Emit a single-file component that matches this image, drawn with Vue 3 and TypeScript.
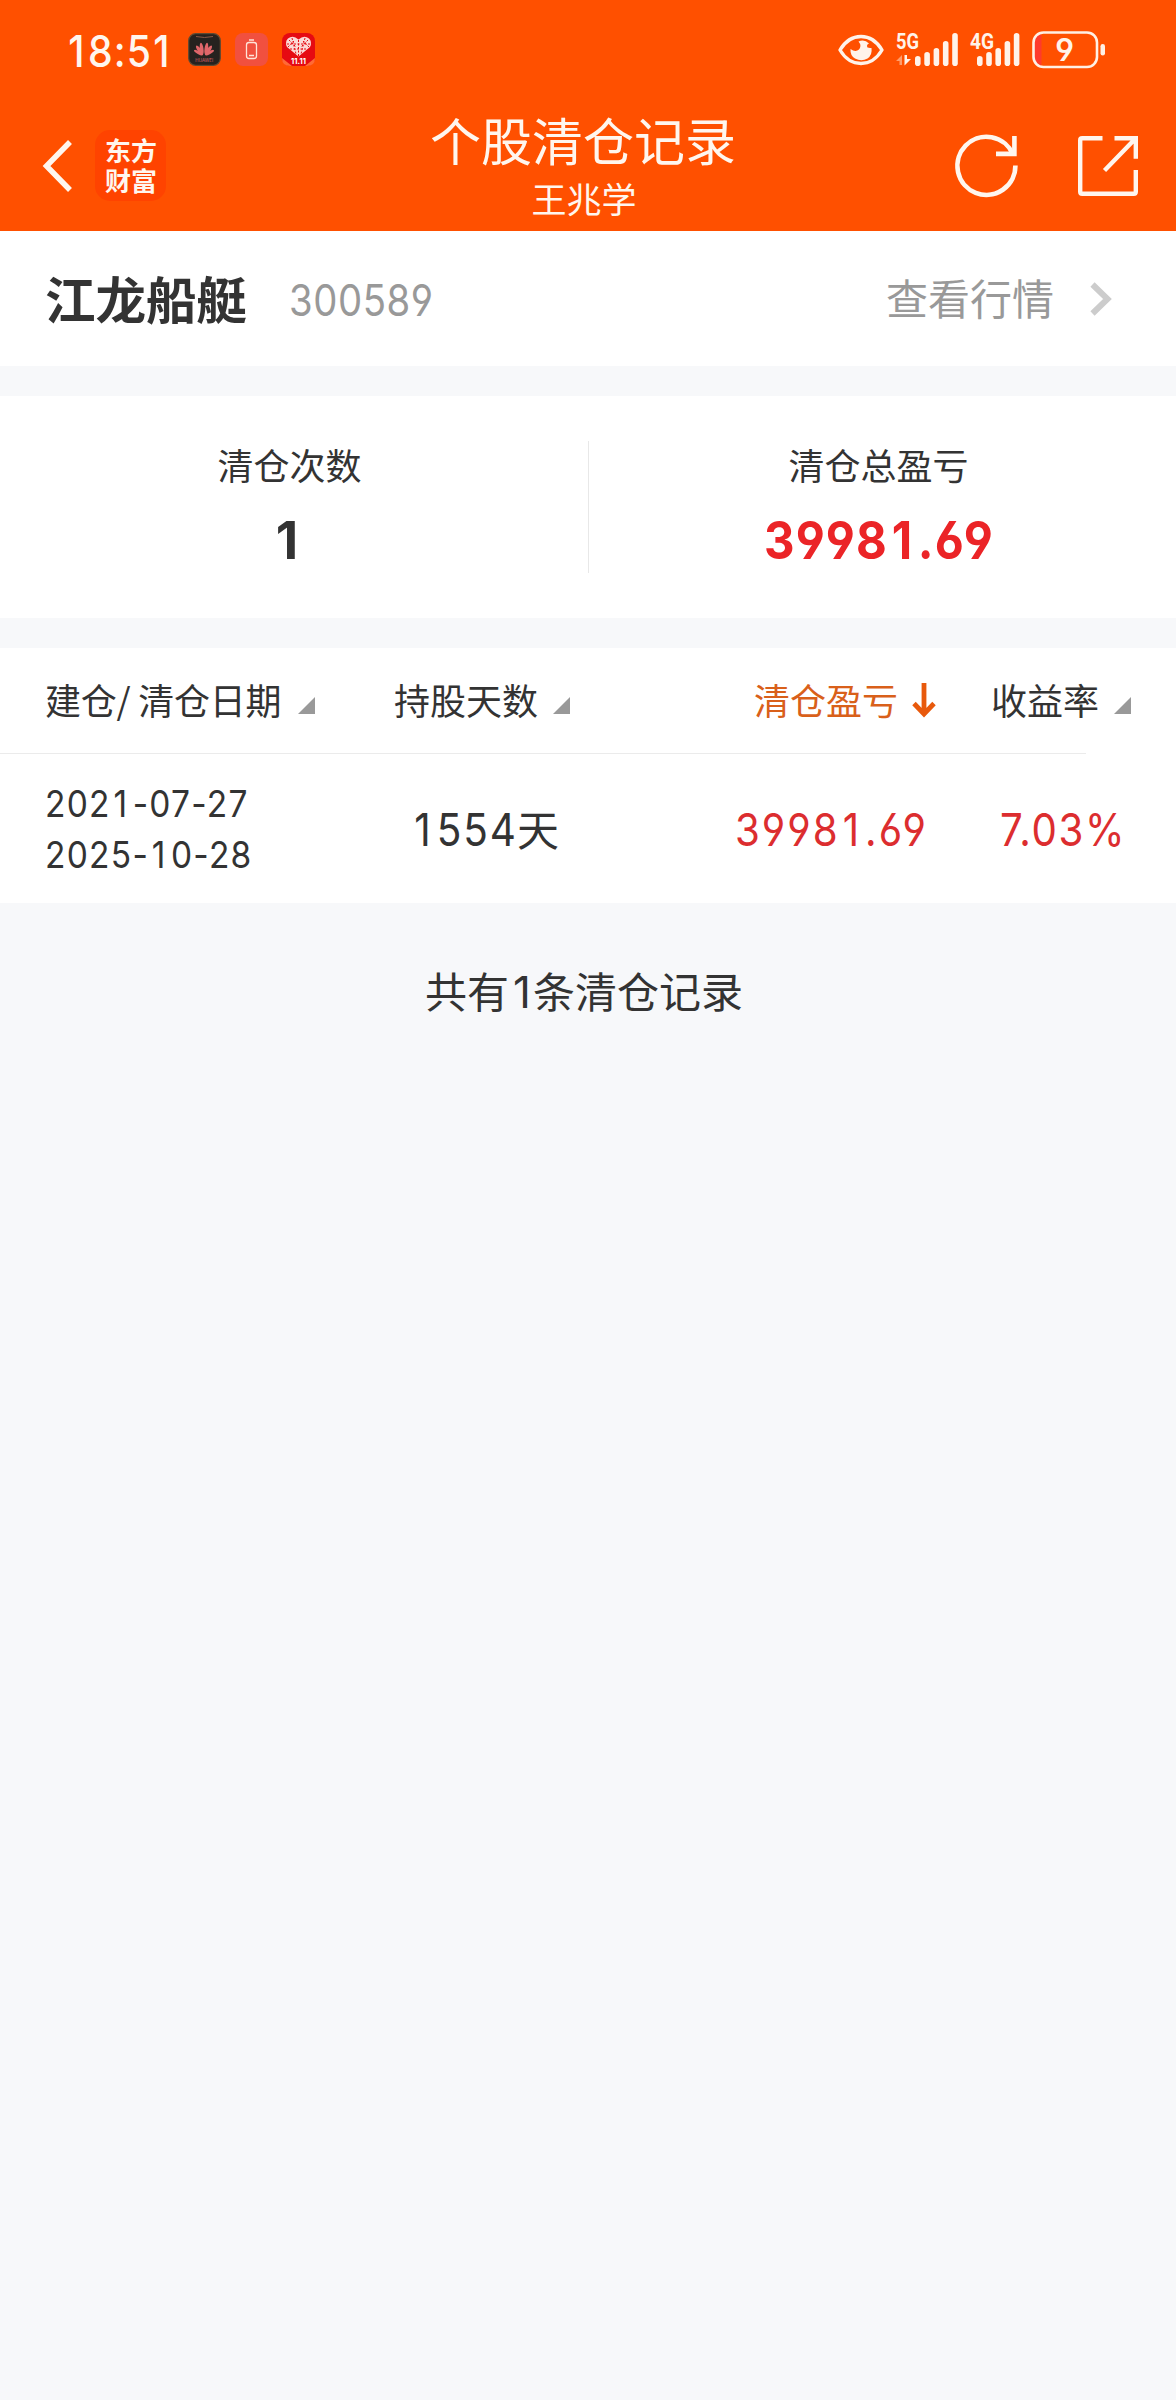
<script setup lang="ts">
import { h } from 'vue'

interface Column {
  key: string
  label: string
  active?: boolean
}

const columns: Column[] = [
  { key: 'date', label: '建仓/ 清仓日期' },
  { key: 'days', label: '持股天数' },
  { key: 'profit', label: '清仓盈亏', active: true },
  { key: 'rate', label: '收益率' },
]

const record = {
  open: '2021-07-27',
  close: '2025-10-28',
  days: '1554',
  profit: '39981.69',
  rate: '7.03%',
}

const bars = [10, 14, 18, 25, 33]

const Num = (props: { text: string }) =>
  h(
    'span',
    { class: 'num' },
    props.text
      .split(/(1)/)
      .filter(Boolean)
      .map((part) => (part === '1' ? h('span', { class: 'one' }, part) : part)),
  )
Num.props = ['text']
</script>

<template>
  <div class="page">
    <header class="header">
      <div class="status">
        <div class="clock"><Num text="18:51" /></div>
        <div class="apps">
          <svg width="33" height="33" viewBox="0 0 33 33">
            <rect x=".7" y=".7" width="31.6" height="31.6" rx="7" fill="#26221f" stroke="#5d4a33" stroke-width="1.2" />
            <path d="M8 3.500q8.500 2 17 0" fill="none" stroke="#8a5a48" stroke-width="1" />
            <g fill="#e0666a">
              <ellipse cx="14.600" cy="15.500" rx="1.800" ry="6" transform="rotate(-8 16 22)" />
              <ellipse cx="17.400" cy="15.500" rx="1.800" ry="6" transform="rotate(8 16 22)" />
              <ellipse cx="15" cy="15.500" rx="1.800" ry="5.600" transform="rotate(-35 16 22)" />
              <ellipse cx="17" cy="15.500" rx="1.800" ry="5.600" transform="rotate(35 16 22)" />
              <ellipse cx="15.500" cy="16" rx="1.500" ry="5" transform="rotate(-62 16 22)" />
              <ellipse cx="16.500" cy="16" rx="1.500" ry="5" transform="rotate(62 16 22)" />
            </g>
            <text x="16.200" y="28.500" text-anchor="middle" class="tiny" font-size="4.500" fill="#d96468">HUAWEI</text>
          </svg>
          <svg width="33" height="33" viewBox="0 0 33 33">
            <rect width="33" height="33" rx="8" fill="#f1503f" />
            <rect x="11.500" y="9.500" width="10" height="16" rx="2.500" fill="none" stroke="#ffe3d8" stroke-width="1.300" />
            <path d="M14 7h5M14 22.500h5" stroke="#ffe3d8" stroke-width="1.500" />
          </svg>
          <svg width="33" height="33" viewBox="0 0 33 33">
            <rect width="33" height="33" rx="8" fill="#e60a12" />
            <path d="M0 25l10 8H8q-8 0-8-8zM33 25l-10 8h2q8 0 8-8z" fill="#ff6a35" />
            <path d="M16.500 23.500L5 14Q2.500 9 6 5.500q5-4 10.500 1 5.500-5 10.500-1 3.500 3.500 1 8.500z" fill="#fbd9d5" />
            <path d="M5 11h23M8 16h17M10 5l4 16M23 5l-4 16M7 7l7 7M26 7l-7 7M16.500 7v16M6 14l6-6M27 14l-6-6" stroke="#e60a12" stroke-width="1" stroke-dasharray="2 1.500" fill="none" />
            <text x="16.500" y="31" text-anchor="middle" class="tiny" font-size="7.500" font-weight="700" fill="#fff">11.11</text>
          </svg>
        </div>
        <div class="signals">
          <svg class="eye" width="46" height="32" viewBox="0 0 46 32">
            <path d="M2 16Q10 2.500 23 2.500T44 16Q36 29.500 23 29.500T2 16z" fill="none" stroke="#fff3ea" stroke-width="3.400" stroke-linejoin="round" />
            <path d="M20.500 7.500q6-2.500 10.500 2-3 1-1.500 4 3 .5 4 .5 1 7-4 10.500-6 3.500-12.500 0-5-3-4.500-9.500 5 3.500 8.500.5 3-4-.5-8z" fill="#fff3ea" />
          </svg>
          <svg class="sig" width="62" height="35" viewBox="0 0 62 35">
            <text x="0" y="17" class="net" font-size="22" textLength="23" lengthAdjust="spacingAndGlyphs">5G</text>
            <path d="M0 29l6-6v10H3.500v-4z" fill="#ff9d6c" />
            <path d="M8.500 23h2.500v4h4l-6.500 6.500z" fill="#fff3ea" />
            <rect v-for="(b, i) in bars" :key="i" :x="19 + i * 9.3" :y="34 - b" width="5.600" :height="b" rx="2.800" fill="#fff3ea" />
          </svg>
          <svg class="sig" width="50" height="35" viewBox="0 0 50 35">
            <text x="0" y="17" class="net" font-size="22" textLength="24" lengthAdjust="spacingAndGlyphs">4G</text>
            <rect v-for="(b, i) in bars" :key="i" :x="7 + i * 9.2" :y="34 - b" width="5.600" :height="b" rx="2.800" fill="#fff3ea" />
          </svg>
          <svg class="sig" width="74" height="38" viewBox="0 0 74 38">
            <path d="M9.500 3.500v31Q2 34 2 26V12q0-8 7.500-8.500z" fill="#ff3a2c" />
            <rect x="1.500" y="1.500" width="63.500" height="34.500" rx="10" fill="none" stroke="#fff0e4" stroke-width="2.600" />
            <rect x="68.500" y="13" width="4.500" height="11.500" rx="2.200" fill="#fff0e4" />
            <text x="32.500" y="30" text-anchor="middle" class="level" font-size="31">9</text>
          </svg>
        </div>
      </div>
      <nav class="nav">
        <div class="left">
          <svg width="30" height="52" viewBox="0 0 30 52">
            <path d="M27 2L3.500 26 27 50" fill="none" stroke="#fff6ee" stroke-width="5.500" />
          </svg>
          <div class="logo">东方<br />财富</div>
        </div>
        <div class="titles">
          <h1>个股清仓记录</h1>
          <p>王兆学</p>
        </div>
        <div class="right">
          <svg width="64" height="64" viewBox="0 0 64 64">
            <path d="M59.400 31.500A29 29 0 1 1 57 20.300" fill="none" stroke="#fff6ee" stroke-width="4.600" />
            <path d="M58.400 2v17.900H40" fill="none" stroke="#fff6ee" stroke-width="4.600" />
          </svg>
          <svg width="60" height="60" viewBox="0 0 60 60">
            <path d="M24.500 2.200H4.200q-2 0-2 2v51.600q0 2 2 2h51.600q2 0 2-2V34M36.500 2.200h21.300v20.600M57 3L26.500 34.500" fill="none" stroke="#fff6ee" stroke-width="4.400" />
          </svg>
        </div>
      </nav>
    </header>

    <section class="stock">
      <strong>江龙船艇</strong>
      <div class="code"><Num text="300589" /></div>
      <a>查看行情</a>
      <svg width="22" height="34" viewBox="0 0 22 34">
        <path d="M2.500 2.500L17.500 17 2.500 31.500" fill="none" stroke="#ccc" stroke-width="6" />
      </svg>
    </section>

    <section class="summary">
      <div class="cell">
        <span class="label">清仓次数</span>
        <div class="value count"><Num text="1" /></div>
      </div>
      <i class="rule"></i>
      <div class="cell">
        <span class="label">清仓总盈亏</span>
        <div class="value total"><Num text="39981.69" /></div>
      </div>
    </section>

    <section class="table">
      <div class="thead">
        <div v-for="c in columns" :key="c.key" class="th" :class="[c.key, { active: c.active }]">
          <span>{{ c.label }}</span>
          <svg v-if="c.active" class="arrow" width="24" height="35" viewBox="0 0 24 35">
            <path d="M12 0v31M2 20.500l10 10.500 10-10.500" fill="none" stroke="#e8590c" stroke-width="4.800" />
          </svg>
          <svg v-else class="tri" width="17" height="17" viewBox="0 0 17 17">
            <path d="M17 0v17H0z" fill="#999" />
          </svg>
        </div>
      </div>
      <div class="line"></div>
      <div class="row">
        <div class="dates">
          <div><Num :text="record.open" /></div>
          <div><Num :text="record.close" /></div>
        </div>
        <div class="hold">
          <div class="hold-num"><Num :text="record.days" /></div>
          <span class="unit">天</span>
        </div>
        <div class="gain"><Num :text="record.profit" /></div>
        <div class="pct"><Num :text="record.rate" /></div>
      </div>
    </section>

    <footer class="foot"><span>共有</span><span class="total-count">1</span><span>条清仓记录</span></footer>
  </div>
</template>

<style>
body {
  margin: 0;
  background: #f7f8fa;
}
</style>

<style scoped>
.page {
  width: 1176px;
  min-height: 2400px;
  background: #f7f8fa;
  color: #333;
  font-family: "Noto Sans CJK SC", sans-serif;
  white-space: nowrap;
}
.page :deep(.num) {
  display: inline-block;
  font-family: Inter, sans-serif;
  font-feature-settings: "cv03", "cv04";
  transform-origin: 0 50%;
}
.page :deep(.one) {
  padding: 0 0.1em 0 0.08em;
}
svg {
  display: block;
  flex: none;
  overflow: visible;
}
.header {
  height: 231px;
  background: #ff5000;
  color: #fff6ee;
}
.status {
  display: flex;
  align-items: center;
  height: 99px;
  margin-bottom: 1px;
}
.clock {
  width: 121px;
  height: 99px;
  margin-left: 67px;
  font-size: 44px;
  line-height: 97px;
  font-weight: 500;
  letter-spacing: 1.300px;
}
.clock :deep(.num) {
  transform: scaleX(0.89);
}
.clock :deep(.one) {
  padding: 0 0.06em 0 0.03em;
}
.apps {
  display: flex;
  gap: 14px;
}
.signals {
  display: flex;
  align-items: center;
  margin-left: 523px;
}
.sig {
  margin-left: 12px;
}
.tiny {
  font-family: Inter, sans-serif;
}
.net {
  font-family: Roboto, sans-serif;
  font-weight: 700;
  fill: #fff3ea;
}
.level {
  font-family: Inter, sans-serif;
  font-weight: 600;
  font-feature-settings: "cv04";
  fill: #fff3ea;
}
.nav {
  display: flex;
  height: 131px;
}
.left {
  display: flex;
  align-items: center;
  width: 388px;
  height: 131px;
  box-sizing: border-box;
  padding-left: 43px;
}
.logo {
  width: 71px;
  height: 71px;
  box-sizing: border-box;
  margin-left: 22px;
  padding: 5px 0 0 10px;
  border-radius: 15px;
  background: #ff4300;
  font-weight: 700;
  font-size: 26px;
  line-height: 30px;
}
.titles {
  display: flex;
  flex-direction: column;
  align-items: center;
  width: 390px;
}
h1,
p {
  margin: 0;
  font-weight: 400;
}
h1 {
  height: 72px;
  font-size: 51px;
  line-height: 79px;
}
p {
  margin-left: 2px;
  font-size: 35px;
  line-height: 51px;
}
.right {
  display: flex;
  align-items: center;
  gap: 58px;
  margin-left: 178px;
}
.stock {
  display: flex;
  align-items: center;
  height: 135px;
  background: #fff;
}
.stock strong {
  width: 244px;
  height: 135px;
  margin-left: 45px;
  font-size: 50.500px;
  line-height: 132px;
}
.code {
  width: 597px;
  height: 135px;
  color: #999;
  font-size: 44px;
  line-height: 132px;
  letter-spacing: 0.650px;
}
.code :deep(.num) {
  transform: scaleX(0.87);
}
.stock a {
  width: 204px;
  height: 135px;
  color: #999;
  font-size: 42px;
  line-height: 132px;
}
.summary {
  display: flex;
  height: 222px;
  margin-top: 30px;
  background: #fff;
}
.cell {
  display: flex;
  flex-direction: column;
  align-items: center;
  width: 579px;
}
.rule {
  width: 1px;
  height: 132px;
  margin: 45px 0 0 9px;
  background: #e8e8e8;
}
.label {
  margin-top: 40px;
  font-size: 36px;
  line-height: 56px;
}
.value {
  height: 64px;
  margin-top: 14px;
  font-size: 52px;
  line-height: 61px;
  font-weight: 700;
}
.count {
  width: 36px;
}
.total {
  width: 230px;
  color: #eb2427;
  letter-spacing: 1.200px;
}
.total :deep(.num) {
  transform: scaleX(0.91);
}
.table {
  height: 255px;
  margin-top: 30px;
  background: #fff;
}
.thead {
  display: flex;
  height: 105px;
}
.th {
  display: flex;
  font-size: 36px;
  line-height: 102px;
}
.th .tri {
  margin: 49px 0 0 15px;
}
.th .arrow {
  margin: 35px 0 0 14px;
}
.th.date {
  width: 349px;
  margin-left: 45px;
  letter-spacing: -0.250px;
}
.th.date .tri {
  margin-left: 17px;
}
.th.days {
  width: 360px;
}
.th.profit {
  width: 237px;
}
.th.active {
  color: #d9601a;
}
.line {
  width: 1086px;
  height: 1px;
  background: #ebebeb;
}
.row {
  display: flex;
  align-items: center;
  height: 149px;
}
.dates {
  width: 366px;
  margin-left: 45px;
  padding-bottom: 2px;
  font-size: 37px;
  line-height: 49px;
  letter-spacing: 1.400px;
}
.dates :deep(.num) {
  transform: scaleX(0.905);
}
.dates :deep(.one) {
  padding-right: 0.13em;
}
.hold {
  display: flex;
  width: 324px;
  font-size: 45px;
  line-height: 58px;
}
.hold-num {
  width: 106px;
  letter-spacing: 2.100px;
}
.hold-num :deep(.num) {
  transform: scaleX(0.9);
}
.unit {
  font-size: 42px;
  line-height: 59px;
}
.gain {
  width: 265px;
  height: 61px;
  font-size: 45px;
  line-height: 58px;
  letter-spacing: 2.200px;
  color: #dc2d2f;
}
.gain :deep(.num),
.pct :deep(.num) {
  transform: scaleX(0.895);
}
.pct {
  height: 61px;
  font-size: 45px;
  line-height: 58px;
  letter-spacing: 1.800px;
  color: #dc2d2f;
}
.foot {
  display: flex;
  margin: 57px 0 0 425px;
  font-size: 42px;
  line-height: 60px;
}
.total-count {
  width: 20px;
  padding-left: 4px;
  font-family: Inter, sans-serif;
  font-size: 44px;
  line-height: 64px;
  height: 60px;
}
</style>
